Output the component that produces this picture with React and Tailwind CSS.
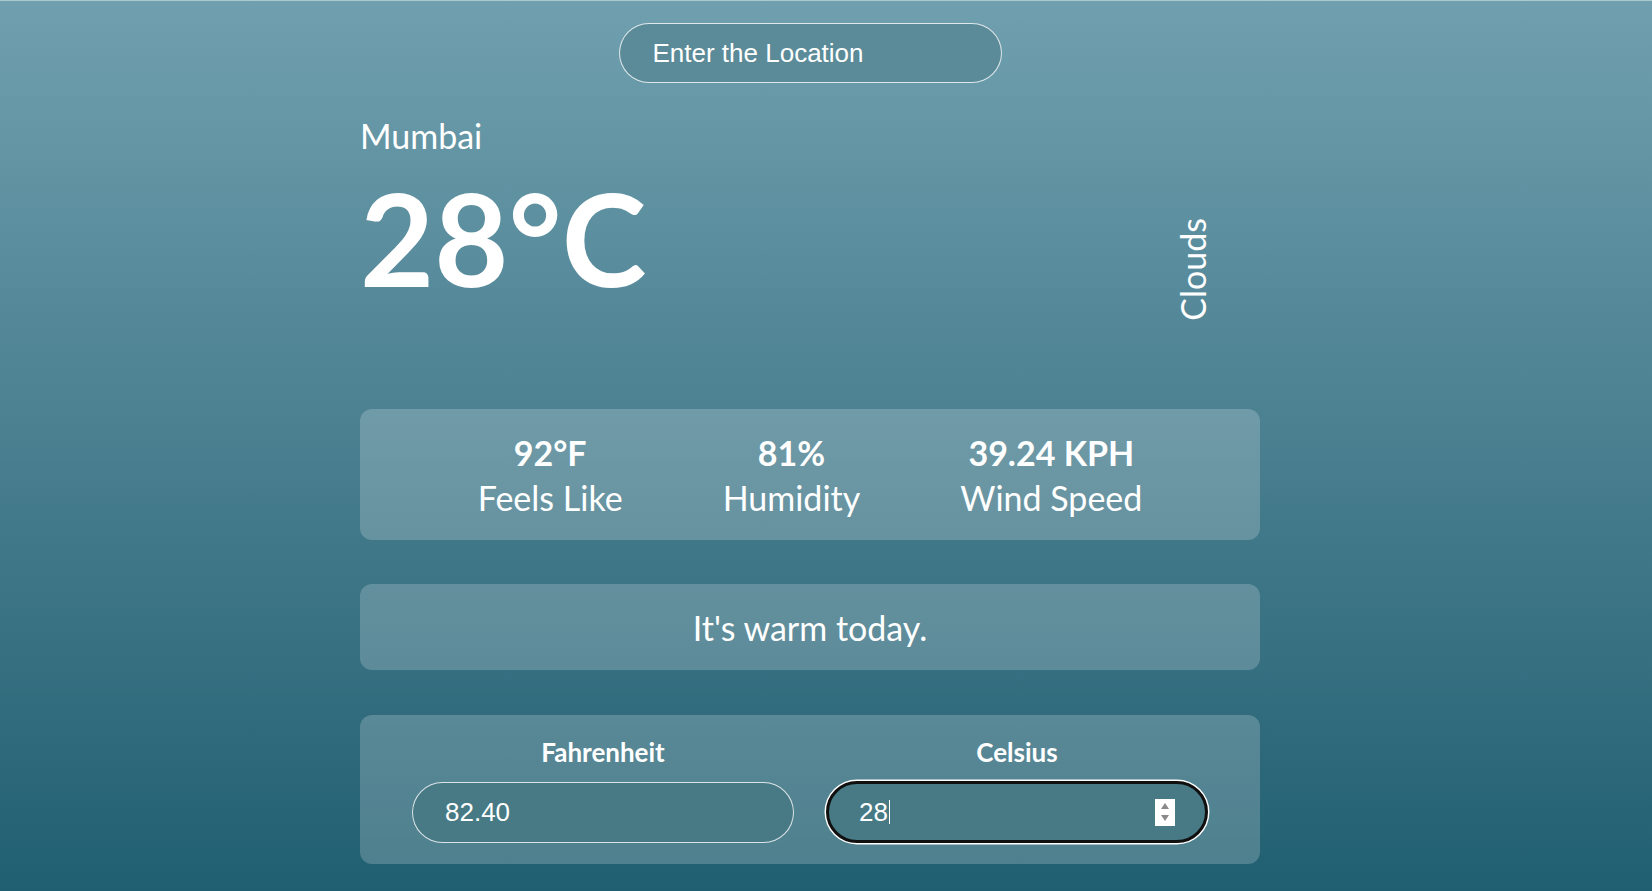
import React from "react";

function Stat({ value, label }) {
  return (
    <div className="flex flex-col items-center text-center">
      <span className="text-[34px] font-bold leading-[45px]">{value}</span>
      <span className="text-[34px] font-normal leading-[45px]">{label}</span>
    </div>
  );
}

export default function App() {
  return (
    <div className="h-screen w-full overflow-hidden border-t border-[#a9c8cf] bg-gradient-to-b from-[#70a0af] to-[#1f5f71] font-['Lato',sans-serif] text-white">
      <div className="ml-[360px] w-[900px] pt-[22px]">
        <input
          type="text"
          placeholder="Enter the Location"
          className="mx-auto block h-[60px] w-[383px] rounded-full border border-white/80 bg-[#5b8b98] pl-[33px] pr-8 font-['Liberation_Sans',Arial,sans-serif] text-[26px] text-white outline-none placeholder:text-white"
        />

        <div className="mt-[34px] flex h-[185px] items-start justify-between">
          <div className="flex flex-col">
            <span className="text-[34px] leading-[38px]">Mumbai</span>
            <span className="mt-[19px] text-[128px] font-bold leading-none">28°C</span>
          </div>
          <span className="mr-[50px] mt-[101px] rotate-180 text-[34px] leading-none [writing-mode:vertical-rl]">
            Clouds
          </span>
        </div>

        <div className="mt-[107px] flex h-[131px] items-center justify-center gap-[100px] rounded-[12px] bg-white/20">
          <Stat value="92°F" label="Feels Like" />
          <Stat value="81%" label="Humidity" />
          <Stat value="39.24 KPH" label="Wind Speed" />
        </div>

        <div className="mt-[44px] flex h-[86px] items-center justify-center rounded-[12px] bg-white/20">
          <span className="text-[34px]">It's warm today.</span>
        </div>

        <div className="mt-[45px] flex h-[149px] justify-center gap-8 rounded-[12px] bg-white/20 pt-[22px]">
          <div className="flex w-[382px] flex-col items-center">
            <span className="text-[26px] font-bold leading-[30px]">Fahrenheit</span>
            <input
              type="text"
              readOnly
              value="82.40"
              className="mt-[15px] block h-[61px] w-[382px] rounded-full border border-white/80 bg-[#477a85] pl-8 font-['Liberation_Sans',Arial,sans-serif] text-[26px] text-white outline-none"
            />
          </div>
          <div className="flex w-[382px] flex-col items-center">
            <span className="text-[26px] font-bold leading-[30px]">Celsius</span>
            <div className="mt-[14px] flex h-[62px] w-[382px] items-center rounded-full border-[3px] border-[#101010] bg-[#477a85] pl-[30px] pr-[30px] font-['Liberation_Sans',Arial,sans-serif] text-[26px] text-white shadow-[0_0_0_1.5px_#ffffff]">
              <span>28</span>
              <span className="ml-[1px] h-[24px] w-[1px] bg-white" />
              <div className="ml-auto flex h-[27px] w-[20px] flex-col items-center justify-center gap-[6px] bg-white">
                <svg width="8" height="6" viewBox="0 0 8 6">
                  <polygon points="4,0 8,6 0,6" fill="#8a8a8a" />
                </svg>
                <svg width="8" height="6" viewBox="0 0 8 6">
                  <polygon points="0,0 8,0 4,6" fill="#8a8a8a" />
                </svg>
              </div>
            </div>
          </div>
        </div>
      </div>
    </div>
  );
}
